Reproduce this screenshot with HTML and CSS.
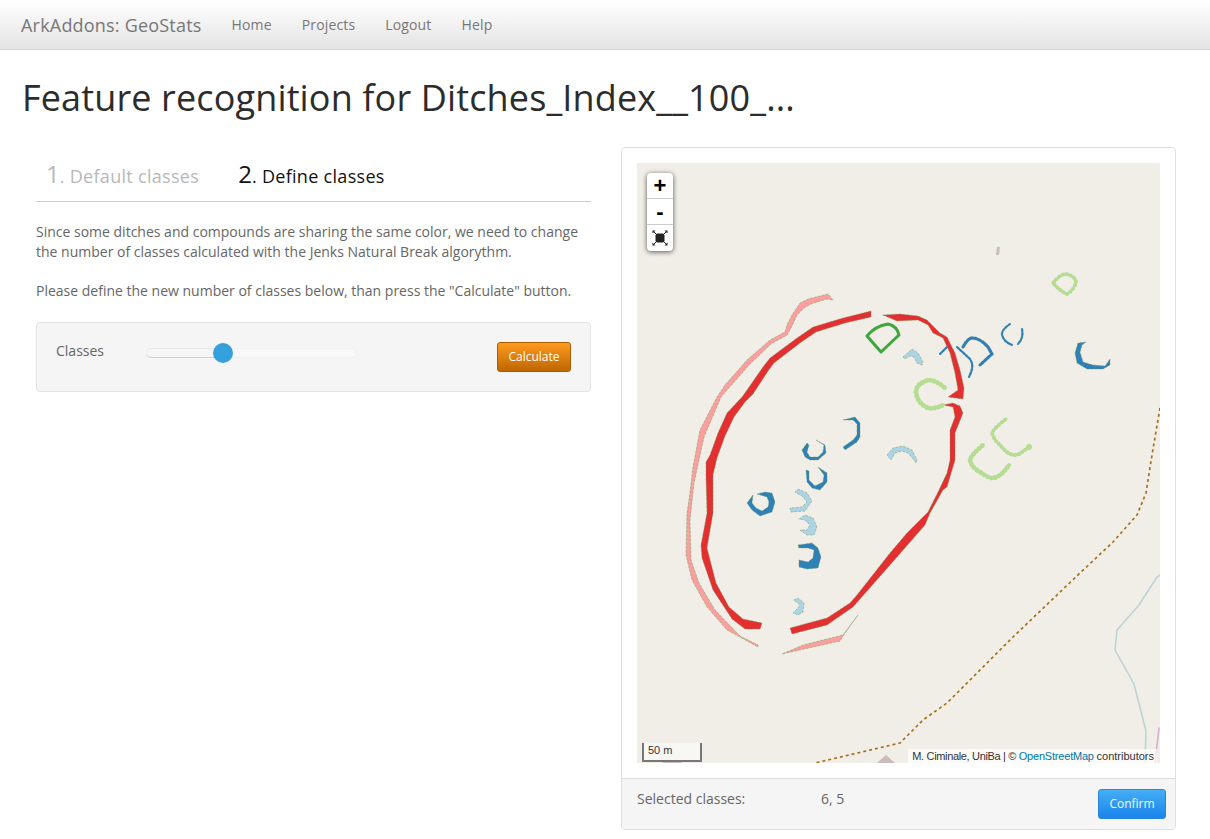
FILE: index.html
```html
<!DOCTYPE html>
<html lang="en">
<head>
<meta charset="utf-8">
<title>ArkAddons: GeoStats</title>
<link rel="stylesheet" href="styles.css">
</head>
<body>
<nav class="navbar">
  <a class="brand">ArkAddons: GeoStats</a>
  <ul class="nav-links">
    <li>Home</li>
    <li>Projects</li>
    <li>Logout</li>
    <li>Help</li>
  </ul>
</nav>
<h1 class="title">Feature recognition for Ditches_Index__100_...</h1>
<main class="content">
  <section class="wizard">
    <div class="steps">
      <div class="step step-done"><span class="num">1</span>. Default classes</div>
      <div class="step step-active"><span class="num">2</span>. Define classes</div>
    </div>
    <p class="copy">Since some ditches and compounds are sharing the same color, we need to change the number of classes calculated with the Jenks Natural Break algorythm.</p>
    <p class="copy">Please define the new number of classes below, than press the "Calculate" button.</p>
    <div class="well">
      <span class="well-label">Classes</span>
      <div class="slider"><span class="slider-fill"></span><span class="slider-handle"></span></div>
      <button class="btn btn-orange">Calculate</button>
    </div>
  </section>
  <section class="panel">
    <div class="panel-body">
      <div class="map">
        <svg class="map-svg" viewBox="637 163 523 600" width="523" height="600">
          <defs>
            <g id="blue">
              <path class="w2" d="M940 354L947 347"/>
              <path class="w3" d="M963 347Q968 338 972 338Q980 338 988 347L992 354L980 365"/>
              <path class="w2" d="M957 347L970 359Q975 366 969 377"/>
              <path class="w2" d="M1010 324Q1001 330 1002 335Q1004 342 1012 345"/>
              <path class="w2" d="M1022 329Q1024 338 1018 344"/>
            </g>
            <g id="lightgreen">
              <path class="w3" d="M1053 283Q1060 274 1066 274Q1075 276 1076 282Q1074 290 1067 294Q1060 291 1053 283Z"/>
              <path class="w4" d="M945 388Q936 380 928 380Q916 384 916 392Q917 403 928 408Q936 409 943 405"/>
              <path class="w3" d="M1006 419Q994 428 992 433Q994 440 1000 445Q1006 453 1013 455Q1020 455 1023 451L1030 447"/>
              <path class="w4" d="M983 445Q971 455 970 460Q971 467 980 472Q988 478 993 478Q1001 477 1009 465"/>
            </g>
          </defs>
          <path class="road" d="M1160 408L1152 455L1146 493L1137 515L1113 542L1080 573L1013 637L947 703L923 720L900 743L815 763"/>
          <path class="river" d="M1160 575L1157 577L1139 605L1117 630L1115 650L1134 684L1146 731L1145 763"/>
          <path class="boundary" d="M1159 728L1156 753L1155 763"/>
          <path class="landmark" d="M997 247L1000 247L999 255L996 255Z"/>
          <path class="landmark" d="M877 763L886 755L895 763Z"/>
          <path class="landmark" d="M661 760L684 760L681 763L663 763Z"/>
          <polygon class="pink edge" points="833,300 828,294 808,299 800,303 792,315 787,325 785,332 770,340 747,360 725,385 717,397 700,430 693,467 689,500 687,513 686,555 692,580 707,607 727,630 758,647 758,645 740,636 715,610 699,583 691,560 690,520 694,483 704,437 721,397 728,389 750,364 771,344 787,335 791,328 797,315 804,308 811,304 827,299"/>
          <polygon class="pink edge" points="858,615 845,633 840,641 782,654 803,645 843,635"/>
          <polygon class="red edge" points="871,311 871,317 845,323 816,332 800,343 774,363 768,371 753,394 745,402 734,417 725,436 717,458 713,475 713,513 707,548 716,583 729,607 743,619 762,623 760,629 745,629 732,619 713,590 702,558 701,545 707,513 706,477 706,462 710,455 718,433 727,413 742,397 747,390 763,367 770,358 797,338 813,327 843,318"/>
          <polygon class="red edge" points="883,315 900,314 918,316 927,320 940,333 947,337 955,353 960,370 964,388 963,399 948,397 958,390 955,373 950,353 943,338 933,333 928,325 918,320 897,321"/>
          <polygon class="red edge" points="943,405 953,403 960,406 963,413 955,433 955,460 947,487 943,490 930,513 925,525 890,565 853,607 827,625 792,634 790,628 827,618 850,603 857,595 890,553 907,533 928,512 939,490 947,473 950,460 950,430 955,417 953,407"/>
          <path class="darkgreen w3" d="M867 336Q875 326 888 324Q897 326 899 335L881 352Z"/>
          <polygon class="blue-fill edge" points="798,545 812,543 818,548 821,557 818,568 807,569 799,567 799,560 808,562 813,558 814,550 808,548 799,548"/>
          <polygon class="blue-fill edge" points="753,495 747,503 752,510 760,516 772,512 775,502 772,493 765,492 757,494 767,497 769,502 768,507 762,511 756,508 752,503"/>
          <polygon class="blue-fill edge" points="802,450 807,443 809,445 807,452 810,457 818,457 823,452 824,445 816,440 825,445 826,453 818,460 810,460 805,457"/>
          <polygon class="blue-fill edge" points="806,470 809,471 809,480 815,486 823,482 824,475 818,467 827,473 827,482 820,490 812,488 807,482"/>
          <polygon class="blue-fill edge" points="1086,342 1078,343 1075,353 1077,363 1087,369 1103,369 1110,365 1110,359 1105,366 1093,365 1083,362 1080,352 1082,345"/>
          <polygon class="blue-fill edge" points="843,420 855,417 860,423 860,437 857,442 845,450 843,447 853,440 857,435 857,424 853,420"/>
          <polygon class="lightblue-fill edge" points="795,492 798,489 807,493 812,501 805,511 791,512 790,508 802,507 807,502 802,496"/>
          <polygon class="lightblue-fill edge" points="799,519 805,515 813,518 817,527 814,535 807,535 800,530 807,530 810,525 805,520"/>
          <polygon class="lightblue-fill edge" points="794,600 798,598 804,603 803,612 798,615 793,613 798,608 800,605"/>
          <polygon class="lightblue-fill edge" points="903,357 912,349 918,353 923,362 922,365 917,363 914,357 910,356 905,359"/>
          <polygon class="lightblue-fill edge" points="887,455 893,448 903,446 912,450 917,460 916,463 914,460 908,453 902,451 895,453 891,460"/>
          <use href="#blue" class="under"/><use href="#blue" class="blue-line"/>
          <use href="#lightgreen" class="under"/><use href="#lightgreen" class="lightgreen-line"/>
          <circle class="blob" cx="1029" cy="447" r="3"/>
        </svg>
        <div class="zoom-control">
          <div class="zoom-btn">+</div>
          <div class="zoom-btn">-</div>
          <div class="zoom-btn">
            <svg class="extent-icon" viewBox="0 0 16 16" width="16" height="16">
              <rect x="3.500" y="3.500" width="9" height="9" rx="2"/>
              <path d="M0.500 0.500h3L0.500 3.500zM15.500 0.500v3L12.500 0.500zM0.500 15.500v-3L3.500 15.500zM15.500 15.500h-3L15.500 12.500z"/>
              <path class="extent-stems" d="M1 1L4 4M15 1L12 4M1 15L4 12M15 15L12 12"/>
            </svg>
          </div>
        </div>
        <div class="scale">50 m</div>
        <div class="attribution">M. Ciminale, UniBa | © <span class="osm">OpenStreetMap</span> <span class="contrib">contributors</span></div>
      </div>
    </div>
    <div class="panel-footer">
      <span class="selected-label">Selected classes:</span>
      <span class="selected-value">6, 5</span>
      <button class="btn btn-blue">Confirm</button>
    </div>
  </section>
</main>
</body>
</html>
```
FILE: styles.css
```css
* { box-sizing: border-box; }
html, body { margin: 0; padding: 0; }
body {
  font-family: "Open Sans", "Noto Sans", sans-serif;
  font-size: 14px;
  line-height: 20px;
  color: #666;
  background: #fff;
}
.navbar {
  display: flex;
  align-items: center;
  height: 50px;
  padding-left: 21px;
  background: linear-gradient(to bottom, #fff 0%, #e4e4e4 100%);
  border-bottom: 1px solid #d4d4d4;
}
.brand { font-size: 18px; letter-spacing: .2px; color: #777; padding-right: 15px; }
.nav-links { display: flex; list-style: none; margin: 0; padding: 0; color: #777; letter-spacing: .15px; }
.nav-links li { padding: 0 15px; }
.title {
  margin: 25px 0 27px 22px;
  font-size: 36px;
  line-height: 46px;
  font-weight: 400;
  letter-spacing: .14px;
  color: #2c2c2c;
}
.content { display: flex; align-items: flex-start; padding-left: 36px; gap: 30px; }
.wizard { width: 555px; }
.steps {
  display: flex;
  height: 54px;
  align-items: center;
  padding-left: 10px;
  gap: 39px;
  border-bottom: 1px solid #ccc;
  font-size: 18px;
  letter-spacing: .3px;
}
.num { font-size: 24px; letter-spacing: 0; }
.step-done { color: #b8b8b8; }
.step-active { color: #111; }
.copy { margin: 0 0 19px; }
.steps + .copy { margin-top: 20px; margin-bottom: 19px; }
.copy + .copy { margin-bottom: 21px; }
.well {
  display: flex;
  align-items: flex-start;
  height: 70px;
  padding: 18px 19px 0;
  background: #f5f5f5;
  border: 1px solid #e3e3e3;
  border-radius: 4px;
}
.well-label { width: 90px; }
.slider {
  position: relative;
  width: 211px;
  height: 10px;
  margin-top: 7px;
  border-radius: 5px;
  background: #f8f8f8;
  border: 1px solid #f0f0f0;
}
.slider-fill {
  position: absolute;
  left: -1px; top: -1px;
  width: 77px;
  height: 10px;
  border-radius: 5px 0 0 5px;
  background: #f6f6f6;
  box-shadow: inset 0 1px #e8e8e8, inset 0 -1px #d0d0d0;
}
.slider-handle {
  position: absolute;
  left: 66px; top: -6px;
  width: 20px;
  height: 20px;
  border-radius: 50%;
  background: #35a1dc;
}
.btn {
  height: 30px;
  padding: 0 10px;
  border-radius: 3px;
  font: 12px/28px "Open Sans", "Noto Sans", sans-serif;
}
.btn-orange {
  margin-left: auto;
  margin-top: 1px;
  color: #fff;
  width: 74px;
  background: linear-gradient(to bottom, #ff9a1f, #bd6700);
  border: 1px solid #a85e00;
}
.btn-blue {
  margin-left: auto;
  width: 68px;
  color: #f0f8ff;
  background: linear-gradient(to bottom, #45aef5, #1a84ec);
  border: 1px solid #2a86dc;
}
.panel {
  width: 555px;
  margin-top: -1px;
  background: #fff;
  border: 1px solid #d6e9c6;
  border-radius: 4px;
}
.panel-body { padding: 15px; }
.map { position: relative; width: 523px; height: 600px; background: #f1eee8; overflow: hidden; }
.map-svg { display: block; fill: none; stroke-linejoin: round; stroke-linecap: round; }
.road { stroke: #a5701a; stroke-width: 1.700; stroke-dasharray: 3 3; stroke-linecap: butt; }
.river { stroke: #b7d3d6; stroke-width: 1.500; }
.boundary { stroke: #d8a9d2; stroke-width: 1.500; stroke-dasharray: 6 1; }
.landmark { fill: #cbbcbc; }
.edge { stroke: #6d9a5e; stroke-width: 0.5; stroke-dasharray: 2 2; }
.pink { fill: #fb9f9e; }
.red { fill: #e42f30; }
.blue-fill { fill: #2f80b6; }
.lightblue-fill { fill: #add3e5; }
.w2 { stroke-width: calc(2px + var(--extra, 0px)); }
.w3 { stroke-width: calc(3px + var(--extra, 0px)); }
.w4 { stroke-width: calc(4px + var(--extra, 0px)); }
.darkgreen { stroke: #3fa63b; }
.under { stroke: #7ea76f; stroke-opacity: .6; --extra: 0.5px; stroke-dasharray: 2 2; stroke-linecap: butt; }
.blue-line { stroke: #2f80b6; }
.lightgreen-line { stroke: #b5de90; }
.blob { fill: #b5de90; }
.zoom-control {
  position: absolute;
  left: 10px; top: 10px;
  width: 26px;
  background: #fff;
  border-radius: 4px;
  box-shadow: 0 1px 5px rgba(0,0,0,.65);
}
.zoom-btn {
  height: 26px;
  display: flex;
  align-items: center;
  justify-content: center;
  border-bottom: 1px solid #ccc;
  font: bold 22px/26px "Liberation Sans", sans-serif;
  color: #000;
}
.zoom-btn:last-child { border-bottom: 0; }
.extent-icon { fill: #222; }
.extent-stems { stroke: #222; stroke-width: 1; fill: none; }
.scale {
  position: absolute;
  left: 5px; bottom: 1px;
  width: 60px;
  height: 19px;
  padding-left: 4px;
  border: 2px solid #777;
  border-top: 0;
  background: rgba(255,255,255,.5);
  font: 11px/14px "Liberation Sans", sans-serif;
  color: #333;
}
.attribution {
  position: absolute;
  right: 3px; bottom: 0;
  height: 14px;
  padding: 0 3px 0 4px;
  background: rgba(255,255,255,.7);
  font: 11px/14px "Liberation Sans", sans-serif;
  letter-spacing: -.34px;
  color: #333;
  white-space: nowrap;
}
.osm { color: #0078a8; letter-spacing: -.2px; }
.contrib { letter-spacing: 0; }
.panel-footer {
  display: flex;
  align-items: flex-start;
  height: 51px;
  padding: 10px 9px 0 15px;
  background: #f5f5f5;
  border-top: 1px solid #ddd;
  border-radius: 0 0 3px 3px;
}
.selected-label { width: 184px; }
```
